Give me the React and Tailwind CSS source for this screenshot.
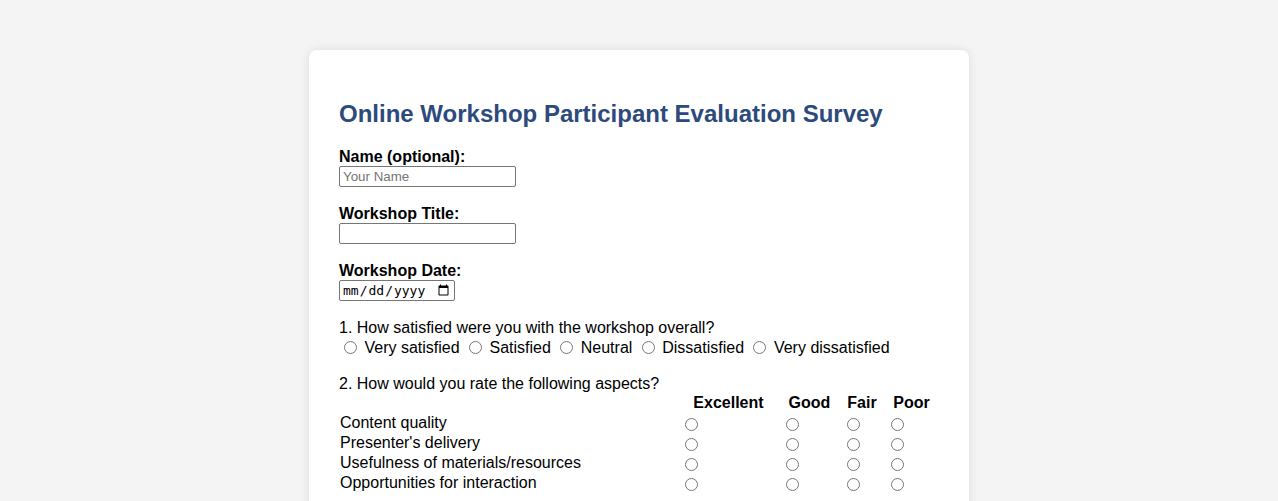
import React from "react";

const satisfaction = [
  "Very satisfied",
  "Satisfied",
  "Neutral",
  "Dissatisfied",
  "Very dissatisfied",
];

const aspects = [
  "Content quality",
  "Presenter's delivery",
  "Usefulness of materials/resources",
  "Opportunities for interaction",
];

const ratings = ["Excellent", "Good", "Fair", "Poor"];

const App = () => {
  return (
    <div
      className="min-h-screen bg-[#f4f4f4] pt-[50px] text-black"
      style={{ fontFamily: '"Liberation Sans", Arial, sans-serif' }}
    >
      <div className="mx-auto w-[660px] rounded-lg bg-white px-[30px] pt-[50px] pb-[30px] shadow-[0_0_10px_rgba(0,0,0,0.1)]">
        <h2 className="text-[24px] font-bold leading-[28px] text-[#2c4a7c]">
          Online Workshop Participant Evaluation Survey
        </h2>

        {/* Basic info */}
        <div className="mt-[20px] flex flex-col">
          <label className="block text-[16px] font-bold leading-[18px]">
            Name (optional):
          </label>
          <input
            type="text"
            placeholder="Your Name"
            className="h-[21px] w-[177px] rounded-[2px] border border-[#767676] px-[3px] text-[13.33px] leading-[15px] placeholder:text-[#757575]"
          />

          <label className="mt-[18px] block text-[16px] font-bold leading-[18px]">
            Workshop Title:
          </label>
          <input
            type="text"
            className="h-[21px] w-[177px] rounded-[2px] border border-[#767676] px-[3px] text-[13.33px]"
          />

          <label className="mt-[18px] block text-[16px] font-bold leading-[18px]">
            Workshop Date:
          </label>
          <input
            type="date"
            className="h-[21px] w-[116px] rounded-[2px] border border-[#767676] px-[2px] text-[13px]"
            style={{ fontFamily: '"DejaVu Sans Mono", monospace' }}
          />
        </div>

        {/* Question 1 */}
        <p className="mt-[18px] text-[16px] leading-[18px]">
          1. How satisfied were you with the workshop overall?
        </p>
        <div className="flex h-[21px] items-center text-[16px] leading-[18px]">
          {satisfaction.map((opt) => (
            <label key={opt} className="flex items-center whitespace-pre">
              <input
                type="radio"
                name="overall"
                className="ml-[5px] mr-[3px] h-[13px] w-[13px]"
              />
              {" " + opt + " "}
            </label>
          ))}
        </div>

        {/* Question 2 */}
        <p className="mt-[17px] text-[16px] leading-[18px]">
          2. How would you rate the following aspects?
        </p>
        <div className="grid grid-cols-[339px_101px_61px_44px_55px] text-[16px] leading-[18px]">
          <div className="h-[20px]"></div>
          {ratings.map((r) => (
            <div key={r} className="flex h-[20px] items-center justify-center font-bold">
              {r}
            </div>
          ))}
          {aspects.map((a, i) => (
            <React.Fragment key={a}>
              <div className="flex h-[20px] items-center pl-[1px]">{a}</div>
              {ratings.map((r) => (
                <div key={r} className="flex h-[20px] items-center">
                  <input
                    type="radio"
                    name={`aspect-${i}`}
                    className="ml-[7px] mt-[2px] h-[13px] w-[13px]"
                  />
                </div>
              ))}
            </React.Fragment>
          ))}
        </div>
      </div>
    </div>
  );
};

export default App;
